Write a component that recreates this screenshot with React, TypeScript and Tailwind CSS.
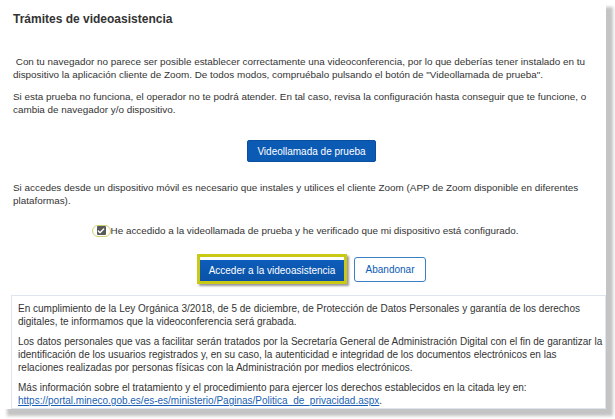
import { Check } from "lucide-react";

const font = { fontFamily: '"Liberation Sans", Arial, sans-serif' };

function Para({ children, className = "" }: { children: React.ReactNode; className?: string }) {
  return <p className={`leading-[13px] text-[#333] ${className}`}>{children}</p>;
}

export default function App() {
  return (
    <div className="w-[615px] h-[419px] bg-white overflow-hidden" style={font}>
      <div className="w-[606px] h-[409px] bg-white shadow-[7px_7px_3px_#c4c4c4] flex flex-col">
        {/* Header */}
        <h1 className="pt-[11px] pl-[13px] text-[12px] leading-[16px] font-bold text-[#333]">
          Trámites de videoasistencia
        </h1>

        {/* Intro */}
        <div className="pl-[13px] pr-[8px] mt-[28px] flex flex-col gap-[9px] text-[9.9px]">
          <Para>
            &nbsp;Con tu navegador no parece ser posible establecer correctamente una videoconferencia, por lo que deberías tener instalado en tu dispositivo la aplicación cliente de Zoom. De todos modos, compruébalo pulsando el botón de "Videollamada de prueba".
          </Para>
          <Para>
            Si esta prueba no funciona, el operador no te podrá atender. En tal caso, revisa la configuración hasta conseguir que te funcione, o cambia de navegador y/o dispositivo.
          </Para>
        </div>

        <div className="flex justify-center pl-[17px] mt-[24px]">
          <button className="w-[129px] h-[22px] rounded-[2px] bg-[#0b5ab4] text-white text-[10px] border border-[#0a4f9e]">
            Videollamada de prueba
          </button>
        </div>

        <div className="pl-[13px] pr-[8px] mt-[19px] text-[9.9px]">
          <Para>
            Si accedes desde un dispositivo móvil es necesario que instales y utilices el cliente Zoom (APP de Zoom disponible en diferentes plataformas).
          </Para>
        </div>

        {/* Confirmation checkbox */}
        <div className="flex justify-center items-center pl-[4px] mt-[17px] h-[13px]">
          <span className="w-[19px] h-[12px] rounded-full border border-[#cfcf70] flex items-center justify-center">
            <span className="w-[9px] h-[9px] rounded-[1px] bg-[#5a5a5a] flex items-center justify-center">
              <Check className="w-[8px] h-[8px] text-white" strokeWidth={4} />
            </span>
          </span>
          <span className="text-[9.9px] leading-[13px] text-[#333]">
            He accedido a la videollamada de prueba y he verificado que mi dispositivo está configurado.
          </span>
        </div>

        {/* Actions */}
        <div className="flex justify-center items-center gap-[7px] pl-[17px] mt-[17px]">
          <div className="border-[3px] border-[#c9c916] shadow-[2px_2px_2px_#9a9a9a]">
            <button className="w-[144px] h-[21px] bg-gradient-to-b from-[#0d5dba] to-[#0a52a6] text-white text-[10px]">
              Acceder a la videoasistencia
            </button>
          </div>
          <button className="w-[72px] h-[25px] rounded-[3px] border border-[#3b7fc4] bg-white text-[#0b5ab4] text-[10px]">
            Abandonar
          </button>
        </div>

        {/* Data protection notice */}
        <div className="ml-[11px] mt-[11px] flex-1 border border-[#dde5ee] pt-[6px] pl-[6px] pr-[2px] flex flex-col gap-[7px] text-[10px]">
          <Para>
            En cumplimiento de la Ley Orgánica 3/2018, de 5 de diciembre, de Protección de Datos Personales y garantía de los derechos digitales, te informamos que la videoconferencia será grabada.
          </Para>
          <Para>
            Los datos personales que vas a facilitar serán tratados por la Secretaría General de Administración Digital con el fin de garantizar la identificación de los usuarios registrados y, en su caso, la autenticidad e integridad de los documentos electrónicos en las relaciones realizadas por personas físicas con la Administración por medios electrónicos.
          </Para>
          <Para>
            Más información sobre el tratamiento y el procedimiento para ejercer los derechos establecidos en la citada ley en:{" "}
            <a href="#" className="text-[#1a5fb4] underline">
              https://portal.mineco.gob.es/es-es/ministerio/Paginas/Politica_de_privacidad.aspx
            </a>
            .
          </Para>
        </div>
      </div>
    </div>
  );
}
